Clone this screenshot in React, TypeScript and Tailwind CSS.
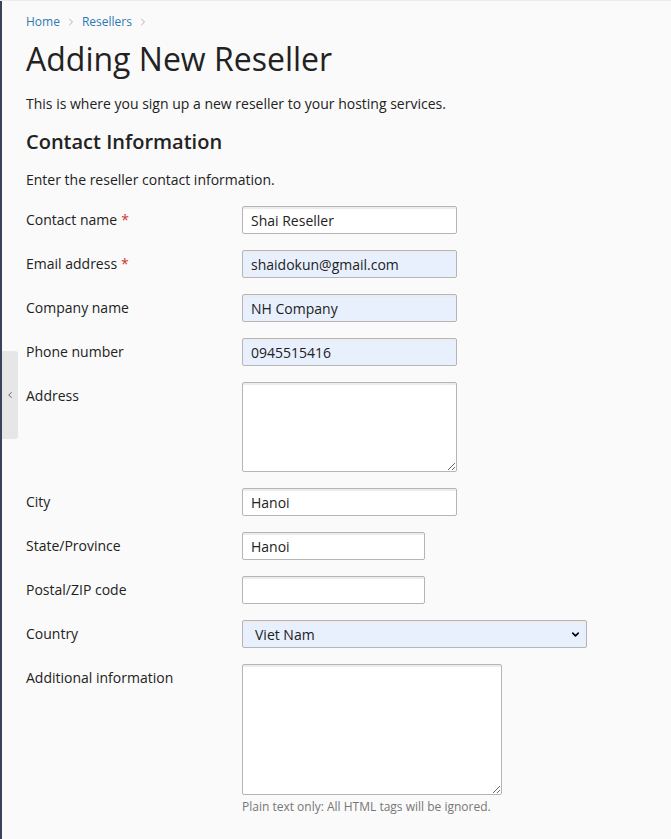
import { ChevronDown, ChevronLeft, ChevronRight } from "lucide-react";

const font = { fontFamily: '"Open Sans", "Noto Sans", sans-serif' };

const labelClass = "pt-[5px] text-[14px] leading-[18px] text-[#222]";
const inputBase =
  "h-[28px] rounded-[2px] border border-[#b5b5b5] px-[8px] text-[14px] text-[#222] shadow-[inset_0_2px_0_#ececec] outline-none";
const filledClass = "bg-[#e8f0fe]";
const plainClass = "bg-white";

type Row = {
  label: string;
  required?: boolean;
  kind: "input" | "textarea" | "select";
  value?: string;
  width: string;
  filled?: boolean;
  height?: string;
  hint?: string;
};

const rows: Row[] = [
  { label: "Contact name", required: true, kind: "input", value: "Shai Reseller", width: "w-[215px]" },
  { label: "Email address", required: true, kind: "input", value: "shaidokun@gmail.com", width: "w-[215px]", filled: true },
  { label: "Company name", kind: "input", value: "NH Company", width: "w-[215px]", filled: true },
  { label: "Phone number", kind: "input", value: "0945515416", width: "w-[215px]", filled: true },
  { label: "Address", kind: "textarea", width: "w-[215px]", height: "h-[90px]" },
  { label: "City", kind: "input", value: "Hanoi", width: "w-[215px]" },
  { label: "State/Province", kind: "input", value: "Hanoi", width: "w-[183px]" },
  { label: "Postal/ZIP code", kind: "input", value: "", width: "w-[183px]" },
  { label: "Country", kind: "select", value: "Viet Nam", width: "w-[345px]", filled: true },
  {
    label: "Additional information",
    kind: "textarea",
    width: "w-[260px]",
    height: "h-[131px]",
    hint: "Plain text only: All HTML tags will be ignored.",
  },
];

function Field({ row }: { row: Row }) {
  const bg = row.filled ? filledClass : plainClass;
  if (row.kind === "textarea") {
    return (
      <div className="flex flex-col">
        <textarea
          readOnly
          className={`${row.width} ${row.height} resize rounded-[2px] border border-[#b5b5b5] bg-white px-[8px] text-[14px] shadow-[inset_0_2px_0_#ececec] outline-none`}
          style={font}
        />
        {row.hint && <p className="mt-[4px] text-[12px] leading-[16px] text-[#777]">{row.hint}</p>}
      </div>
    );
  }
  if (row.kind === "select") {
    return (
      <div className={`${row.width} ${bg} ${inputBase} relative flex items-center pl-[12px]`}>
        <span>{row.value}</span>
        <ChevronDown className="absolute right-[5px] top-[8px] h-[11px] w-[11px] text-black" strokeWidth={3.5} />
      </div>
    );
  }
  return (
    <input
      readOnly
      value={row.value}
      className={`${row.width} ${bg} ${inputBase}`}
      style={font}
    />
  );
}

export default function App() {
  return (
    <div className="relative min-h-[839px] w-full border-t border-[#ececec] bg-[#fafafa]" style={font}>
      <div className="absolute bottom-0 left-0 top-0 w-[2px] bg-[#37445a]" />
      <div className="absolute left-[2px] top-[350px] flex h-[88px] w-[16px] items-center justify-center rounded-r-[3px] bg-[#e6e6e6]">
        <ChevronLeft className="h-[10px] w-[10px] text-[#444]" strokeWidth={2} />
      </div>

      <div className="pl-[26px] pr-[20px]">
        <nav className="flex items-center pt-[13px] text-[12px] leading-[16px] text-[#2c7bb0]">
          <span>Home</span>
          <ChevronRight className="mx-[5px] h-[12px] w-[12px] text-[#999]" strokeWidth={1.5} />
          <span>Resellers</span>
          <ChevronRight className="mx-[5px] h-[12px] w-[12px] text-[#999]" strokeWidth={1.5} />
        </nav>

        <h1 className="mt-[9px] text-[32px] font-normal leading-[40px] text-[#222]">Adding New Reseller</h1>
        <p className="mt-[15px] text-[14px] leading-[20px] text-[#222]">
          This is where you sign up a new reseller to your hosting services.
        </p>

        <h2 className="mt-[14px] text-[20px] font-semibold leading-[28px] text-[#222]">Contact Information</h2>
        <p className="mt-[14px] text-[14px] leading-[20px] text-[#222]">Enter the reseller contact information.</p>

        <div className="mt-[16px] flex flex-col gap-[16px]">
          {rows.map((row) => (
            <div key={row.label} className="grid grid-cols-[216px_1fr]">
              <div className={labelClass}>
                {row.label}
                {row.required && <span className="ml-[4px] text-[#d0342c]">*</span>}
              </div>
              <Field row={row} />
            </div>
          ))}
        </div>
      </div>
    </div>
  );
}
